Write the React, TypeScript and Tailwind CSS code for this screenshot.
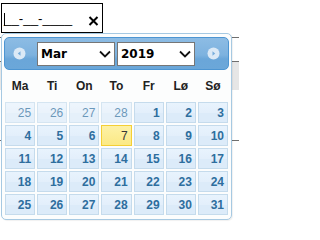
import React from "react";

const weeks: { d: number; other?: boolean; today?: boolean }[][] = [
  [{ d: 25, other: true }, { d: 26, other: true }, { d: 27, other: true }, { d: 28, other: true }, { d: 1 }, { d: 2 }, { d: 3 }],
  [{ d: 4 }, { d: 5 }, { d: 6 }, { d: 7, today: true }, { d: 8 }, { d: 9 }, { d: 10 }],
  [{ d: 11 }, { d: 12 }, { d: 13 }, { d: 14 }, { d: 15 }, { d: 16 }, { d: 17 }],
  [{ d: 18 }, { d: 19 }, { d: 20 }, { d: 21 }, { d: 22 }, { d: 23 }, { d: 24 }],
  [{ d: 25 }, { d: 26 }, { d: 27 }, { d: 28 }, { d: 29 }, { d: 30 }, { d: 31 }],
];

const dayNames = ["Ma", "Ti", "On", "To", "Fr", "Lø", "Sø"];

function Chevron() {
  return (
    <svg width="12" height="8" viewBox="0 0 12 8" className="shrink-0">
      <path d="M1 1.5 L6 6.5 L11 1.5" fill="none" stroke="#111" strokeWidth="1.8" />
    </svg>
  );
}

function FakeSelect({ value }: { value: string }) {
  return (
    <div className="w-[78px] h-[24px] border border-[#767676] bg-white flex items-center justify-between pl-[3px] pr-[3px] font-['DejaVu_Sans',sans-serif] font-bold text-[12px] text-black">
      <span>{value}</span>
      <Chevron />
    </div>
  );
}

function NavCircle({ dir }: { dir: "w" | "e" }) {
  return (
    <svg width="13" height="13" viewBox="0 0 13 13">
      <circle cx="6.5" cy="6.5" r="6" fill="#dbe9f6" />
      {dir === "w" ? (
        <path d="M4.8 6.5 L7.5 4.2 L7.5 8.8 Z" fill="#76acdb" />
      ) : (
        <path d="M8.2 6.5 L5.5 4.2 L5.5 8.8 Z" fill="#76acdb" />
      )}
    </svg>
  );
}

const cellBase =
  "h-[21px] flex items-center justify-end pr-[3px] font-['Liberation_Sans',Arial,sans-serif] text-[12px]";
const blueCell =
  "border border-[#c5dbec] bg-[linear-gradient(to_bottom,#e8f3fd_0%,#e3effb_50%,#dcebf9_51%,#dcebf9_100%)] text-[#2e6e9e]";

export default function App() {
  return (
    <div className="relative w-[239px] h-[227px] bg-white overflow-hidden">
      {/* date input */}
      <div className="pt-[3px] pl-[1px]">
        <div className="relative w-[102px] h-[30px] border border-black flex items-center pl-[2px] pt-[1px]">
          <span className="font-['Liberation_Sans',Arial,sans-serif] text-[13.33px] text-black leading-none">__-__-____</span>
          <span className="absolute left-[2px] top-[9px] w-px h-[13px] bg-black" />
          <svg className="absolute left-[86px] top-[12px]" width="11" height="10" viewBox="0 0 11 10">
            <path d="M1.5 1 L9.5 9 M9.5 1 L1.5 9" stroke="#000" strokeWidth="2" />
          </svg>
        </div>
      </div>

      {/* page table behind the popup */}
      <div className="mt-[4px] border-t border-[#6f6f6f]">
        <div className="h-[23px]" />
        <div className="h-[29px] border-t border-[#6f6f6f] bg-[#e6e6e6]" />
        <div className="h-[50px]" />
        <div className="border-t border-[#6f6f6f]" />
      </div>

      {/* datepicker popup */}
      <div className="absolute left-[1px] top-[33px] w-[231px] border border-[#a6c9e2] rounded-[5px] bg-[#fcfdfd] px-[2px] pt-[3px] pb-[3px] shadow-[1px_1px_1px_rgba(0,0,0,0.06)]">
        <div className="relative h-[33px] border border-[#4d95d2] rounded-[5px] bg-[linear-gradient(to_bottom,#8dbce4_0%,#7db2df_55%,#6aa6d9_68%,#6ba7d9_100%)] flex items-center pl-[32px] gap-[2px]">
          <span className="absolute left-[8px] top-[9px]">
            <NavCircle dir="w" />
          </span>
          <FakeSelect value="Mar" />
          <FakeSelect value="2019" />
          <span className="absolute left-[202px] top-[9px]">
            <NavCircle dir="e" />
          </span>
        </div>

        <div className="grid grid-cols-7 h-[31px] pt-[1px] items-center font-['Liberation_Sans',Arial,sans-serif] font-bold text-[12px] text-[#222]">
          {dayNames.map((n) => (
            <div key={n} className="text-center">
              {n}
            </div>
          ))}
        </div>

        <div className="flex flex-col">
          {weeks.map((w, i) => (
            <div key={i} className="grid grid-cols-7">
              {w.map((c, j) => (
                <div key={j} className="p-[1px]">
                  {c.today ? (
                    <div className={`${cellBase} border border-[#f4cf35] bg-[linear-gradient(to_bottom,#fdf1a6,#fbe985)] text-[#363636]`}>
                      {c.d}
                    </div>
                  ) : c.other ? (
                    <div className={`${cellBase} ${blueCell} opacity-70`}>{c.d}</div>
                  ) : (
                    <div className={`${cellBase} ${blueCell} font-bold`}>{c.d}</div>
                  )}
                </div>
              ))}
            </div>
          ))}
        </div>
      </div>
    </div>
  );
}
